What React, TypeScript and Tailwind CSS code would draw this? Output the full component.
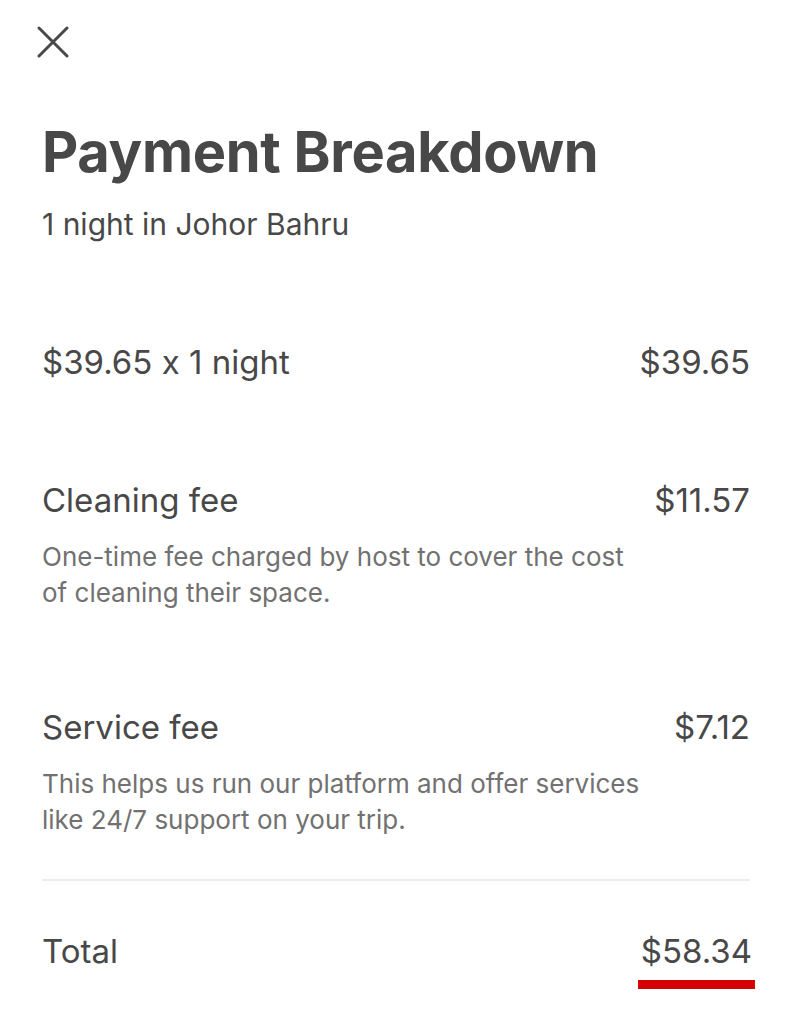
const items = [
  { label: "$39.65 x 1 night", amount: "$39.65" },
  {
    label: "Cleaning fee",
    amount: "$11.57",
    note: "One-time fee charged by host to cover the cost of cleaning their space.",
  },
  {
    label: "Service fee",
    amount: "$7.12",
    note: "This helps us run our platform and offer services like 24/7 support on your trip.",
  },
];

function CloseIcon() {
  return (
    <svg width="32" height="32" viewBox="0 0 32 32" fill="none">
      <path
        d="M2 2L30 30M30 2L2 30"
        stroke="#484848"
        strokeWidth="3"
        strokeLinecap="round"
      />
    </svg>
  );
}

export default function App() {
  return (
    <div
      className="min-h-[1024px] bg-white pl-[42px] pr-[45px] text-[#484848] [font-feature-settings:'calt'_0]"
      style={{ fontFamily: "Inter, 'Noto Sans', sans-serif" }}
    >
      <div className="-ml-[5px] pt-[26px]">
        <CloseIcon />
      </div>

      <h1 className="mt-[58px] text-[56px] font-bold leading-[72px] tracking-[-0.3px]">
        Payment Breakdown
      </h1>
      <p className="mt-[16px] text-[30px] leading-[40px]">1 night in Johor Bahru</p>

      <div className="mt-[96px] flex flex-col gap-[94px]">
        {items.map((item) => (
          <div key={item.label}>
            <div className="flex items-baseline justify-between text-[33px] leading-[44px]">
              <span>{item.label}</span>
              <span>{item.amount}</span>
            </div>
            {item.note && (
              <p className="mt-[17px] max-w-[605px] text-[26px] leading-[36px] text-[#717171]">
                {item.note}
              </p>
            )}
          </div>
        ))}
      </div>

      <div className="mt-[41px] h-[2px] bg-[#ebebeb]" />

      <div className="mt-[48px] flex items-baseline justify-between text-[33px] leading-[44px]">
        <span>Total</span>
        <span className="-mr-[5px] border-b-[9px] border-[#d50000] px-[3px] pb-[7px]">$58.34</span>
      </div>
    </div>
  );
}
